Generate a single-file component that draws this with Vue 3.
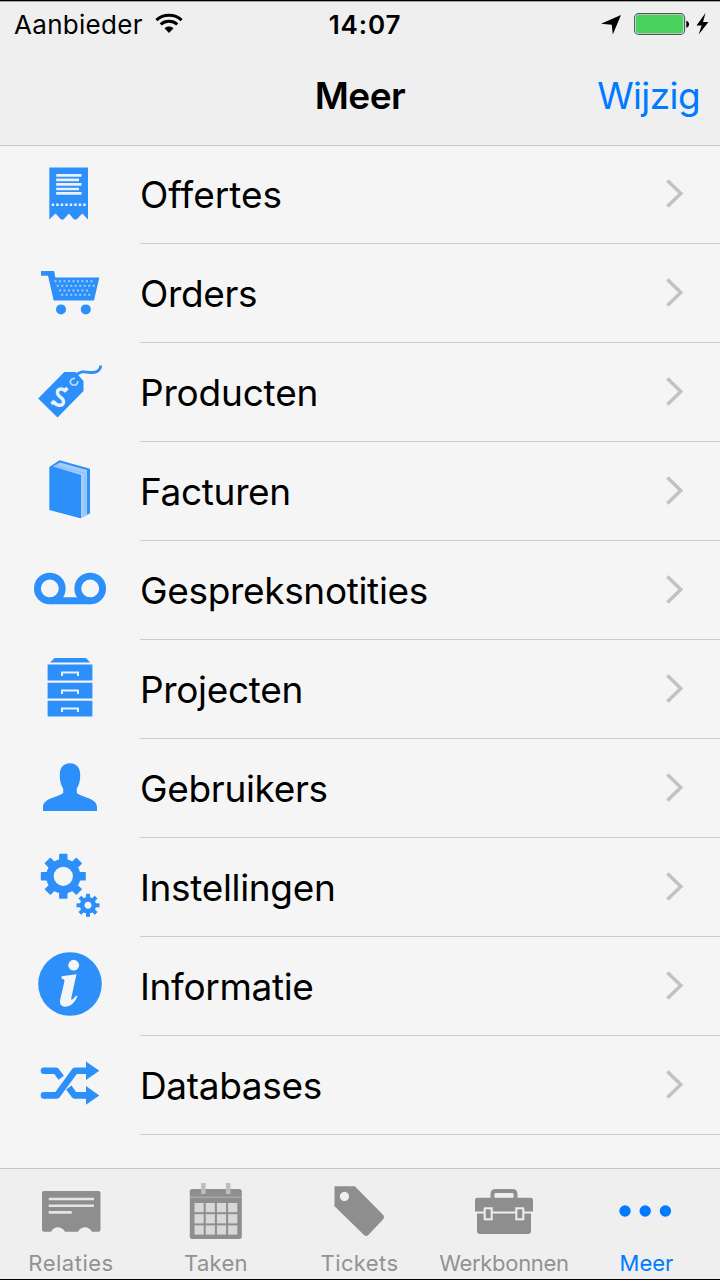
<script setup>
const items = [
  { id: 'quote', label: 'Offertes' },
  { id: 'cart', label: 'Orders' },
  { id: 'price', label: 'Producten' },
  { id: 'book', label: 'Facturen' },
  { id: 'tape', label: 'Gespreksnotities' },
  { id: 'cabinet', label: 'Projecten' },
  { id: 'user', label: 'Gebruikers' },
  { id: 'gears', label: 'Instellingen' },
  { id: 'info', label: 'Informatie' },
  { id: 'shuffle', label: 'Databases' },
]
const tabs = [
  { id: 'card', label: 'Relaties' },
  { id: 'calendar', label: 'Taken' },
  { id: 'ticket', label: 'Tickets' },
  { id: 'toolbox', label: 'Werkbonnen' },
  { id: 'more', label: 'Meer' },
]
const angles = [0, 45, 90, 135, 180, 225, 270, 315]
const dotRows = [
  { x: 55.5, y: 281.2, n: 9 },
  { x: 57.7, y: 285.8, n: 9 },
  { x: 60, y: 290.4, n: 7 },
  { x: 62.2, y: 294.8, n: 7 },
]
</script>

<template>
  <div class="screen">
    <header class="top">
      <div class="status">
        <div class="side">
          <span class="carrier">Aanbieder</span>
          <svg class="wifi" width="28" height="21" viewBox="0 0 28 21">
            <g fill="none" stroke="#000" stroke-width="3">
              <path d="M1.4 7.2C8.2.7 19.8.7 26.6 7.2" />
              <path d="M5.7 11.4C10.3 7.3 17.7 7.3 22.3 11.4" />
            </g>
            <path d="M9.5 15.2C11.8 12.9 16.2 12.9 18.5 15.2L14 20Z" />
          </svg>
        </div>
        <span class="time">14:07</span>
        <div class="side right">
          <svg width="120" height="30" viewBox="600 10 120 30">
            <path d="M621 15L612.8 34.5L611.7 24.8L601 23.8Z" />
            <rect x="634.6" y="13.6" width="50" height="20.8" rx="4" fill="#f4f4f4" stroke="#555" stroke-width="1.1" />
            <rect x="635.8" y="14.8" width="47.6" height="18.4" rx="2.8" fill="#48d35f" />
            <path d="M686.3 20.8C690 21.8 690 26.8 686.3 27.8Z" />
            <path d="M705.5 13L696.5 25.4H701.6L698.7 34.5L708.5 22H703Z" />
          </svg>
        </div>
      </div>
      <div class="nav">
        <h1 class="title">Meer</h1>
        <a class="edit">Wijzig</a>
      </div>
    </header>

    <main class="list">
      <div v-for="(item, i) in items" :key="item.id" class="row">
        <svg class="icon" width="80" height="98" :viewBox="`30 ${145 + i * 99} 80 98`">
          <template v-if="item.id === 'quote'">
            <path d="M49.3 167.5H88V219.5L82.3 213.5L76.5 219.5H74L69 213.5L63.5 219.5H61L55.5 213.5L49.3 219.5Z" />
            <path class="cut" stroke-width="2.6" d="M56.2 175.4H81.5M56.2 179.9H79M56.2 184.4H81.5M56.2 189H79M56.2 193.4H81.5" />
            <path class="cut" stroke-width="2.6" stroke-dasharray="2.5 2" d="M51.7 204.8H86.5" />
          </template>
          <template v-else-if="item.id === 'cart'">
            <path d="M41 271H54.2L55.3 277.6H99.3L94 300.6H53.7L48 275.7H41Z" />
            <circle cx="61" cy="309.4" r="5" />
            <circle cx="85.8" cy="309.4" r="5" />
            <template v-for="r in dotRows" :key="r.y">
              <rect v-for="n in r.n" :key="n" class="dot" :x="r.x - 1 + (n - 1) * 4.5" :y="r.y - 1" width="2" height="2" />
            </template>
          </template>
          <template v-else-if="item.id === 'price'">
            <path d="M38.2 398.5L64.3 372H75.5L83.5 381V391L57.5 417.6Z" />
            <path d="M75 376C80 371 84 371.5 89 372.3C96 373.3 100 371 101 365.5" fill="none" stroke="#2d8ff9" stroke-width="2.8" />
            <path class="soft" d="M75 378.3C70.5 378 69 382 71.5 384.3C74.5 386.5 78 384.5 77.8 381" stroke-width="1.7" />
            <path class="cut" stroke-width="3.4" d="M66 391.6C62 387 57 389 57.5 393.2C58 397.5 64.5 397.5 63.5 402.3C62.4 406.8 56.5 406 53.5 401.5M64.5 391L67.5 388M51.5 404L54.5 401" />
          </template>
          <template v-else-if="item.id === 'book'">
            <path d="M49.3 467L59.5 460.3L90 468.8V513.3L80.3 518.3L49.3 510Z" />
            <path d="M53 466.5L60 462.4L87 470V515.6L81 517.6V475Z" fill="#a5ccfa" />
            <path d="M54.5 465.5L85 473.5V515.5" fill="none" stroke="#78b4fa" stroke-width=".7" />
          </template>
          <template v-else-if="item.id === 'tape'">
            <g fill="none" stroke="#2d8ff9" stroke-width="6.9">
              <circle cx="49.8" cy="588.5" r="12.4" />
              <circle cx="90.2" cy="588.5" r="12.4" />
              <path d="M49.8 600.7H90.2" />
            </g>
          </template>
          <template v-else-if="item.id === 'cabinet'">
            <path d="M50 662.5L54.5 658H86L90.2 662.5Z" />
            <path d="M47.6 664.6H92.4V680.6H47.6ZM47.6 682.8H92.4V698.5H47.6ZM47.6 700.7H92.4V716.5H47.6Z" />
            <path class="cut" stroke-width="2" d="M62 676V672.6H78V676M62 694V690.5H78V694M62 712V708.5H78V712" />
          </template>
          <template v-else-if="item.id === 'user'">
            <path d="M70 763.3C76.3 763.3 80.2 767.3 80.2 774.5C80.2 781.5 79 785 76.8 788.5V793C82 797.5 97 798 97 807V811H43V807C43 798 58 797.5 63.2 793V788.5C61 785 59.8 781.5 59.8 774.5C59.8 767.3 63.7 763.3 70 763.3Z" />
          </template>
          <template v-else-if="item.id === 'gears'">
            <g transform="translate(63.3 876.3)">
              <circle r="13.4" fill="none" stroke="#2d8ff9" stroke-width="7.6" />
              <rect v-for="a in angles" :key="a" x="-4.2" y="-22.5" width="8.4" height="9" rx=".8" :transform="`rotate(${a})`" />
            </g>
            <g transform="translate(88 905.3)">
              <circle r="5.9" fill="none" stroke="#2d8ff9" stroke-width="4.8" />
              <rect v-for="a in angles" :key="a" x="-2" y="-11.5" width="4" height="5" :transform="`rotate(${a})`" />
            </g>
          </template>
          <template v-else-if="item.id === 'info'">
            <circle cx="70" cy="984" r="31.8" />
            <circle cx="73.7" cy="965.2" r="5.4" fill="#f5f5f5" />
            <path fill="#f5f5f5" d="M61.5 976.3L76.5 974.3L71.3 997.8C70.6 1001.3 73.5 999.5 76 995.5L77.3 996.5C74.5 1003.5 69.5 1006.8 65.3 1006.7C60.5 1006.5 59.3 1003.5 60.3 999L64.1 983C64.8 980 64.6 978.8 61.8 979Z" />
          </template>
          <template v-else>
            <g fill="none" stroke="#2d8ff9" stroke-width="6.6" stroke-linejoin="round">
              <path d="M44 1070.7H56L61.2 1077.8M68.8 1087.5L74.5 1095.4H88" />
              <path d="M44 1095.4H57L75 1070.7H88" />
            </g>
            <circle cx="44" cy="1070.7" r="3.3" /><circle cx="44" cy="1095.4" r="3.3" />
            <path d="M86 1061.4L99.3 1070.7L86 1080ZM86 1086.1L99.3 1095.4L86 1104.7Z" />
          </template>
        </svg>
        <div class="cell">
          <span :class="['label', item.id]">{{ item.label }}</span>
          <svg class="chevron" width="20" height="30" viewBox="0 0 20 30">
            <path d="M2.4 1.5L15.8 14.5L2.4 27.5" fill="none" stroke="#c2c2c6" stroke-width="3.5" />
          </svg>
        </div>
      </div>
    </main>

    <nav class="tabs">
      <a v-for="(tab, i) in tabs" :key="tab.id" :class="['tab', { active: tab.id === 'more' }]">
        <svg width="144" height="76" :viewBox="`${i * 144} 1169 144 76`">
          <template v-if="tab.id === 'card'">
            <path d="M44 1191H98.5Q100.5 1191 100.5 1193V1229.5Q100.5 1231.7 98.5 1231.7H92C89 1225.7 81 1225.7 78 1231.7H65C62 1225.7 54 1225.7 51 1231.7H44Q42 1231.7 42 1229.5V1193Q42 1191 44 1191Z" />
            <path d="M48.7 1199H94M48.7 1205.7H94M48.7 1212.4H71.7" stroke="#e5e5e5" stroke-width="2.6" />
          </template>
          <template v-else-if="tab.id === 'calendar'">
            <rect x="189.8" y="1189" width="52" height="50" rx="2.5" />
            <path d="M190 1197.2H241.7" stroke="#a8a8a8" stroke-width="1.4" />
            <path d="M203.4 1183V1194M228.2 1183V1194" stroke="#bdbdbd" stroke-width="4.6" />
            <template v-for="y in 3" :key="y">
              <rect v-for="x in 4" :key="x" :x="183.3 + x * 11.2" :y="1191.8 + y * 11.2" width="9.2" height="9.2" fill="#d8d8d8" />
            </template>
          </template>
          <template v-else-if="tab.id === 'ticket'">
            <path fill-rule="evenodd" d="M334.5 1186.2H354.8L383 1214.8Q385 1217.3 383 1219.5L368.3 1235Q366.3 1237 364 1235L334.5 1206.2ZM344.4 1191.8A4.6 4.6 0 1 0 344.5 1191.8Z" />
          </template>
          <template v-else-if="tab.id === 'toolbox'">
            <path d="M492.5 1199V1194Q492.5 1191 496 1191H512Q515.5 1191 515.5 1194V1199" fill="none" stroke="#8e8e8e" stroke-width="4" />
            <path d="M477 1197.8H531Q533 1197.8 533 1200V1211.4H475V1200Q475 1197.8 477 1197.8ZM477 1213.5H531V1231Q531 1234 528 1234H480Q477 1234 477 1231Z" />
            <rect x="484.7" y="1208.3" width="7" height="11" stroke="#efefef" stroke-width="2" />
            <rect x="516.3" y="1208.3" width="7" height="11" stroke="#efefef" stroke-width="2" />
          </template>
          <template v-else>
            <circle cx="625" cy="1211" r="5.7" /><circle cx="645.2" cy="1211" r="5.7" /><circle cx="665.4" cy="1211" r="5.7" />
          </template>
        </svg>
        <span :class="['caption', tab.id]">{{ tab.label }}</span>
      </a>
    </nav>
  </div>
</template>

<style>
body { background: #f5f5f5; }
</style>

<style scoped>
.screen {
  box-sizing: border-box;
  width: 720px;
  height: 1280px;
  display: flex;
  flex-direction: column;
  overflow: hidden;
  background: #f5f5f5;
  border-top: 1px solid #000;
  border-bottom: 1px solid #000;
  font-family: Inter, "Liberation Sans", sans-serif;
  color: #000;
}
.top {
  box-sizing: border-box;
  height: 145px;
  flex: none;
  background: #efefef;
  border-top: 1px solid #a5a5a5;
  border-bottom: 1px solid #c6c6c8;
}
.status {
  display: grid;
  grid-template-columns: 1fr auto 1fr;
  align-items: center;
  height: 46px;
}
.side { display: flex; align-items: center; padding-left: 14px; }
.side.right { justify-content: flex-end; padding: 0; }
.carrier { font-size: 26px; line-height: 32px; letter-spacing: 0.3px; }
.wifi { margin: -3px 0 0 12px; }
.time { padding-left: 10px; margin-top: -1px; font-size: 26px; font-weight: 600; letter-spacing: 0.9px; }
.nav {
  display: grid;
  grid-template-columns: 1fr auto 1fr;
  align-items: center;
  height: 95px;
}
.title { grid-column: 2; margin: 0; font-size: 37px; font-weight: 600; letter-spacing: -0.5px; }
.edit { justify-self: end; margin-right: 20px; font-size: 37px; letter-spacing: -0.6px; color: #007aff; }
.list { flex: 1; margin-top: -1px; }
.row { display: flex; height: 99px; }
.icon { flex: none; margin-left: 30px; fill: #2d8ff9; }
.cut { fill: none; stroke: #e8f1fc; }
.soft { fill: none; stroke: #b8d8fc; }
.dot { fill: #9accff; }
.cell {
  flex: 1;
  box-sizing: border-box;
  margin-left: 30px;
  padding-right: 35px;
  display: flex;
  align-items: center;
  justify-content: space-between;
  border-bottom: 1px solid #cdcdd0;
}
.label { font-size: 37px; line-height: 46px; padding-top: 2px; letter-spacing: -0.34px; }
.label.quote { letter-spacing: 0; }
.label.price { letter-spacing: -0.2px; }
.tabs {
  box-sizing: border-box;
  flex: none;
  height: 111px;
  display: grid;
  grid-template-columns: repeat(5, 144px);
  background: #efefef;
  border-top: 1px solid #c6c6c8;
}
.tab { display: flex; flex-direction: column; align-items: center; color: #929292; fill: #8e8e8e; }
.tab.active { color: #007aff; fill: #007aff; }
.caption { font-size: 22px; line-height: 28px; margin-top: 4px; letter-spacing: 0.3px; }
.caption.card { margin-left: -2px; letter-spacing: 0.5px; }
.caption.ticket { margin-left: -1px; letter-spacing: 0.4px; }
.caption.toolbox { letter-spacing: -0.3px; }
.caption.more { margin-left: -3px; letter-spacing: 0; }
</style>
